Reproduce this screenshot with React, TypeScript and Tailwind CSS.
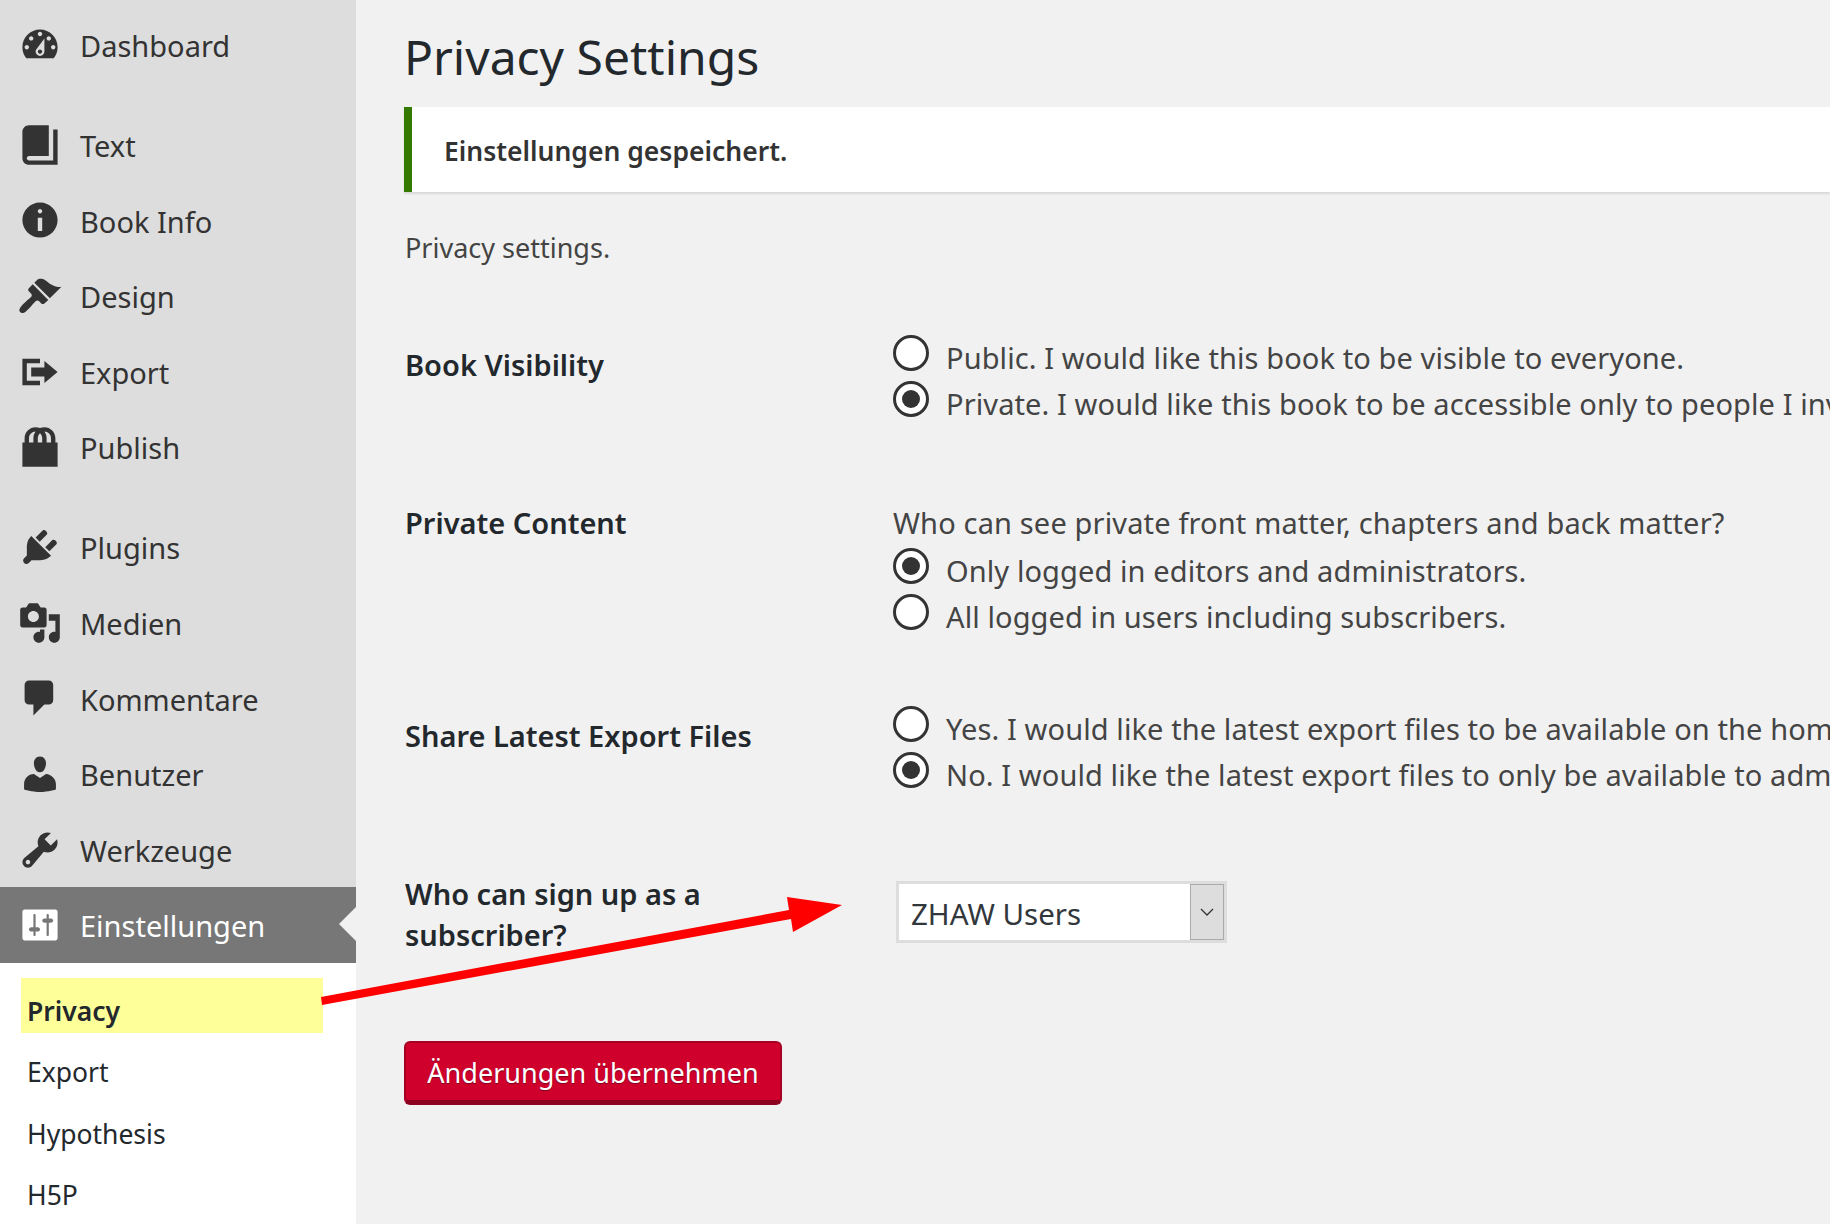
const icons: Record<string, string> = {
  dashboard:
    "M3.76 16h12.48c1.1-1.37 1.76-3.11 1.76-5 0-4.42-3.58-8-8-8s-8 3.58-8 8c0 1.89.66 3.63 1.76 5zM10 4c.55 0 1 .45 1 1s-.45 1-1 1-1-.45-1-1 .45-1 1-1zM6 6c.55 0 1 .45 1 1s-.45 1-1 1-1-.45-1-1 .45-1 1-1zm8 0c.55 0 1 .45 1 1s-.45 1-1 1-1-.45-1-1 .45-1 1-1zm-5.37 5.55L12 7v6c0 1.1-.9 2-2 2s-2-.9-2-2c0-.57.24-1.08.63-1.45zM4 10c.55 0 1 .45 1 1s-.45 1-1 1-1-.45-1-1 .45-1 1-1zm12 0c.55 0 1 .45 1 1s-.45 1-1 1-1-.45-1-1 .45-1 1-1zm-5 3c0-.55-.45-1-1-1s-1 .45-1 1 .45 1 1 1 1-.45 1-1z",
  book: "M16 3h2v16H5c-1.66 0-3-1.34-3-3V4c0-1.66 1.34-3 3-3h9v14H5c-.55 0-1 .45-1 1s.45 1 1 1h11V3z",
  info: "M10 2c4.42 0 8 3.58 8 8s-3.58 8-8 8-8-3.58-8-8 3.58-8 8-8zm1 4c0-.55-.45-1-1-1s-1 .45-1 1 .45 1 1 1 1-.45 1-1zm0 9V9H9v6h2z",
  brush:
    "M14.48 11.06L7.41 3.99l1.5-1.5c.5-.56 2.3-.47 3.51.32 1.21.8 1.43 1.28 2.91 2.1 1.18.64 2.45 1.26 4.45.85zM13.77 11.77L6.7 4.7 4.93 6.47c-.39.39-.39 1.02 0 1.41l1.06 1.06c.39.39.39 1.03 0 1.42C5 11.4 2.8 13.1 1.3 14.9.4 15.9.5 17 1 17.4c.5.5 1.6.5 2.6-.4 1.8-1.5 3.5-3.7 4.5-4.7.39-.39 1.03-.39 1.42 0l1.06 1.06c.39.39 1.02.39 1.41 0z",
  migrate: "M4 6h6V4H2v12.01h8V14H4V6zm2 2h6V5l6 5-6 5v-3H6V8z",
  bag: "M17 8h1v11H2V8h1V6c0-2.76 2.24-5 5-5 .71 0 1.39.15 2 .42.61-.27 1.29-.42 2-.42 2.76 0 5 2.24 5 5v2zM5 6v2h2V6c0-1.13.39-2.16 1.02-3H8C6.35 3 5 4.35 5 6zm10 2V6c0-1.65-1.35-3-3-3h-.02c.63.84 1.02 1.87 1.02 3v2h2zm-5-4.22C9.39 4.33 9 5.12 9 6v2h2V6c0-.88-.39-1.67-1-2.22z",
  plugin:
    "M13.11 4.36L9.87 7.6 8 5.73l3.24-3.24c.35-.34 1.05-.2 1.56.32.52.51.66 1.21.31 1.55zm-8 1.77l.91-1.12 9.01 9.01-1.19.84c-.71.71-2.63 1.16-3.82 1.16H6.14L4.9 17.26c-.59.59-1.54.59-2.12 0-.59-.58-.59-1.53 0-2.12l1.24-1.24v-3.88c0-1.13.4-3.19 1.09-3.89zm7.26 3.97l3.24-3.24c.34-.35 1.04-.21 1.55.31.52.51.66 1.21.31 1.55l-3.24 3.25z",
  media:
    "M13 11V4c0-.55-.45-1-1-1h-1.67L9 1H5L3.67 3H2c-.55 0-1 .45-1 1v7c0 .55.45 1 1 1h10c.55 0 1-.45 1-1zM7 4.5c1.38 0 2.5 1.12 2.5 2.5S8.38 9.5 7 9.5 4.5 8.38 4.5 7 5.62 4.5 7 4.5zM14 6h5v10.5c0 1.38-1.12 2.5-2.5 2.5S14 17.88 14 16.5s1.12-2.5 2.5-2.5c.17 0 .34.02.5.05V9h-3V6zm-4 8.05V13h2v3.5c0 1.38-1.12 2.5-2.5 2.5S7 17.88 7 16.5 8.12 14 9.5 14c.17 0 .34.02.5.05z",
  comment: "M5 2h9c1.1 0 2 .9 2 2v7c0 1.1-.9 2-2 2h-2l-5 5v-5H5c-1.1 0-2-.9-2-2V4c0-1.1.9-2 2-2z",
  user: "M10 9.25c-2.27 0-2.73-3.44-2.73-3.44C7 4.02 7.82 2 9.97 2c2.16 0 2.98 2.02 2.71 3.81 0 0-.41 3.44-2.68 3.44zm0 2.57L12.72 10c2.39 0 4.52 2.33 4.52 4.53v2.49s-3.65 1.13-7.24 1.13c-3.65 0-7.24-1.13-7.24-1.13v-2.49c0-2.25 1.94-4.48 4.47-4.48z",
  tools:
    "M16.68 9.77c-1.34 1.34-3.3 1.67-4.95.99l-5.41 6.52c-.99.99-2.59.99-3.58 0s-.99-2.59 0-3.57l6.52-5.42c-.68-1.65-.35-3.61.99-4.95 1.28-1.28 3.12-1.62 4.72-1.06l-2.89 2.89 2.82 2.82 2.86-2.87c.53 1.58.18 3.39-1.08 4.65zM3.81 16.21c.4.39 1.04.39 1.43 0 .4-.4.4-1.04 0-1.43-.39-.4-1.03-.4-1.43 0-.39.39-.39 1.03 0 1.43z",
  settings:
    "M18 16V4c0-.55-.45-1-1-1H3c-.55 0-1 .45-1 1v12c0 .55.45 1 1 1h14c.55 0 1-.45 1-1zM8 11h1c.55 0 1 .45 1 1s-.45 1-1 1H8v1.5c0 .28-.22.5-.5.5s-.5-.22-.5-.5V13H6c-.55 0-1-.45-1-1s.45-1 1-1h1V5.5c0-.28.22-.5.5-.5s.5.22.5.5V11zm5-2h-1c-.55 0-1-.45-1-1s.45-1 1-1h1V5.5c0-.28.22-.5.5-.5s.5.22.5.5V7h1c.55 0 1 .45 1 1s-.45 1-1 1h-1v5.5c0 .28-.22.5-.5.5s-.5-.22-.5-.5V9z",
};

const MenuItem = ({ icon, label, active }: { icon: string; label: string; active?: boolean }) => (
  <div className={`relative flex h-[75.6px] items-center pl-[18px] text-[29px] ${active ? "bg-[#777777] text-white" : "text-[#333333]"}`}>
    <svg viewBox="0 0 20 20" className="mr-[18px] h-11 w-11 shrink-0" fill="currentColor" fillRule="evenodd">
      <path d={icons[icon]} />
    </svg>
    <span className="pt-[2px]">{label}</span>
    {active && (
      <div className="absolute top-[20px] right-0 h-0 w-0 border-y-[17px] border-r-[17px] border-y-transparent border-r-[#f1f1f1]" />
    )}
  </div>
);

const Radio = ({ label, checked }: { label: string; checked?: boolean }) => (
  <div className="flex h-[46px] items-center whitespace-nowrap">
    <div className="mt-[-10px] mr-[17px] flex h-[36px] w-[36px] shrink-0 items-center justify-center rounded-full border-[3px] border-[#333333] bg-white">
      {checked && <div className="h-[18px] w-[18px] rounded-full bg-[#333333]" />}
    </div>
    <span className="tracking-[0.1px]">{label}</span>
  </div>
);

const Label = ({ children }: { children: React.ReactNode }) => (
  <div className="w-[489px] shrink-0 pl-[1px] font-semibold text-[#23282d]">{children}</div>
);

export default function App() {
  return (
    <div className="relative flex h-screen w-full overflow-hidden bg-[#f1f1f1] font-['Noto_Sans',sans-serif] text-[29px] text-[#444444]">
      <aside className="flex w-[356px] shrink-0 flex-col bg-white">
        <div className="bg-[#dddddd] pt-[7px]">
          <MenuItem icon="dashboard" label="Dashboard" />
          <div className="mt-[24.4px]">
            <MenuItem icon="book" label="Text" />
            <MenuItem icon="info" label="Book Info" />
            <MenuItem icon="brush" label="Design" />
            <MenuItem icon="migrate" label="Export" />
            <MenuItem icon="bag" label="Publish" />
          </div>
          <div className="mt-[24.4px]">
            <MenuItem icon="plugin" label="Plugins" />
            <MenuItem icon="media" label="Medien" />
            <MenuItem icon="comment" label="Kommentare" />
            <MenuItem icon="user" label="Benutzer" />
            <MenuItem icon="tools" label="Werkzeuge" />
          </div>
          <MenuItem icon="settings" label="Einstellungen" active />
        </div>
        <div className="pt-[15px] text-[26.5px] text-[#23282d]">
          <div className="ml-[21px] flex h-[55px] w-[302px] items-center bg-[#ffff99] pt-[12px] pl-[6px] font-semibold">Privacy</div>
          <div className="flex h-[61px] items-center pt-[18px] pl-[27px]">Export</div>
          <div className="flex h-[61px] items-center pt-[20px] pl-[27px]">Hypothesis</div>
          <div className="flex h-[61px] items-center pt-[20px] pl-[27px]">H5P</div>
        </div>
      </aside>

      <main className="min-w-0 flex-1 pl-[48px]">
        <h1 className="flex h-[107px] items-center pt-[6px] text-[48px] text-[#23282d]">Privacy Settings</h1>
        <div className="flex h-[85px] items-center border-l-[8px] border-[#347a00] bg-white pt-[4px] pl-[32px] text-[26.5px] font-semibold text-[#333333] shadow-[0_2px_2px_rgba(0,0,0,0.1)]">
          Einstellungen gespeichert.
        </div>
        <p className="mt-[36px] flex h-[40px] items-center pl-[1px] text-[27px]">Privacy settings.</p>

        <div className="mt-[67px] flex">
          <Label>
            <div className="flex h-[46px] items-center pt-[14px]">Book Visibility</div>
          </Label>
          <div>
            <Radio label="Public. I would like this book to be visible to everyone." />
            <Radio label="Private. I would like this book to be accessible only to people I invite." checked />
          </div>
        </div>

        <div className="mt-[73px] flex">
          <Label>
            <div className="flex h-[46px] items-center pb-[1px]">Private Content</div>
          </Label>
          <div>
            <div className="flex h-[46px] items-center pb-[1px] tracking-[0.15px] whitespace-nowrap">Who can see private front matter, chapters and back matter?</div>
            <div className="pt-[2px]">
              <Radio label="Only logged in editors and administrators." checked />
              <Radio label="All logged in users including subscribers." />
            </div>
          </div>
        </div>

        <div className="mt-[66px] flex">
          <Label>
            <div className="flex h-[46px] items-center pt-[14px]">Share Latest Export Files</div>
          </Label>
          <div>
            <Radio label="Yes. I would like the latest export files to be available on the homepage for free download." />
            <Radio label="No. I would like the latest export files to only be available to administrators, editors and authors." checked />
          </div>
        </div>

        <div className="mt-[71px] flex">
          <Label>
            <div className="pt-[4px] leading-[41px]">
              Who can sign up as a
              <br />
              subscriber?
            </div>
          </Label>
          <div className="mt-[12px] ml-[3px] flex h-[62px] w-[331px] items-stretch border-[3px] border-[#dddddd] bg-white">
            <div className="flex flex-1 items-center pt-[4px] pl-[12px] text-[29.5px] text-[#32373c]">ZHAW Users</div>
            <div className="flex w-[34px] items-center justify-center border border-[#aaaaaa] bg-[#dddddd]">
              <svg viewBox="0 0 14 8" className="h-2 w-3.5" fill="none" stroke="#333333" strokeWidth="1.3">
                <path d="M1 1l6 6 6-6" />
              </svg>
            </div>
          </div>
        </div>

        <button className="mt-[86px] flex h-[64px] w-[378px] items-center justify-center rounded-[6px] border-2 border-b-[5px] border-[#a80025] border-b-[#8c0020] bg-[#d0002c] pt-[4px] text-[27px] text-white [text-shadow:0_1px_1px_#7a0020]">
          Änderungen übernehmen
        </button>
      </main>

      <svg className="absolute top-0 left-0 h-full w-full" viewBox="0 0 1830 1224" fill="#ff0000">
        <path d="M321 997L789 910L787 897L842 905L793 932L791 919L322 1005Z" />
      </svg>
    </div>
  );
}
